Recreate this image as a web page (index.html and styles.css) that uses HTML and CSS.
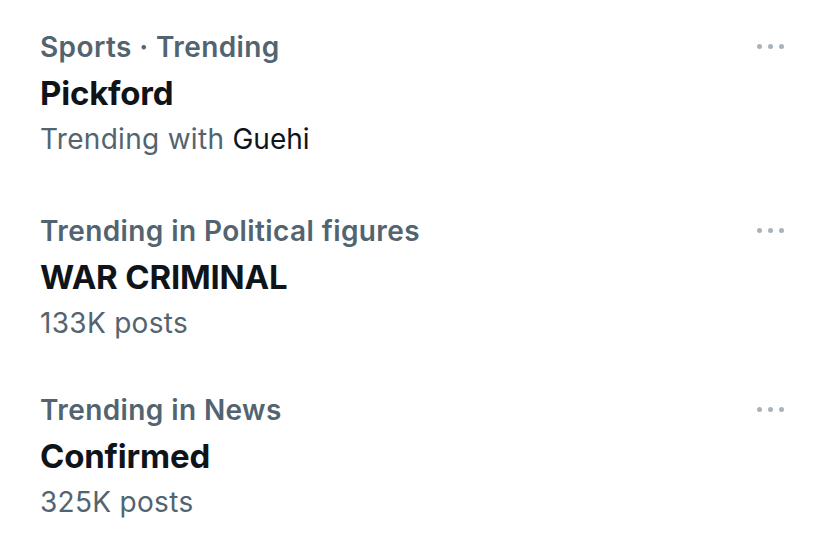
FILE: index.html
```html
<!DOCTYPE html>
<html>
<head>
<meta charset="utf-8">
<link rel="stylesheet" href="styles.css">
</head>
<body>
<div class="list">
  <div class="trend trend-first">
    <div class="text">
      <div class="meta">Sports · Trending</div>
      <div class="title">Pickford</div>
      <div class="sub">Trending with <span class="dark">Guehi</span></div>
    </div>
    <div class="more"><span></span><span></span><span></span></div>
  </div>
  <div class="trend">
    <div class="text">
      <div class="meta">Trending in Political figures</div>
      <div class="title">WAR CRIMINAL</div>
      <div class="sub">133K posts</div>
    </div>
    <div class="more"><span></span><span></span><span></span></div>
  </div>
  <div class="trend trend-last">
    <div class="text">
      <div class="meta">Trending in News</div>
      <div class="title">Confirmed</div>
      <div class="sub">325K posts</div>
    </div>
    <div class="more"><span></span><span></span><span></span></div>
  </div>
</div>
</body>
</html>
```
FILE: styles.css
```css
html, body {
  margin: 0;
  padding: 0;
  background: #ffffff;
}
body {
  font-family: Inter, "Noto Sans", sans-serif;
  width: 828px;
  height: 549px;
  overflow: hidden;
}
.list {
  display: flex;
  flex-direction: column;
  gap: 43px;
  padding: 24px 0 0 40px;
}
.trend {
  display: flex;
  justify-content: space-between;
  align-items: flex-start;
  padding-right: 44px;
}
.trend-first {
  margin-bottom: 3px;
}
.trend-last {
  margin-top: -2px;
}
.text {
  display: flex;
  flex-direction: column;
}
.meta {
  font-size: 28px;
  font-weight: 600;
  color: #536471;
  line-height: 46px;
  letter-spacing: 0.4px;
}
.title {
  font-size: 33px;
  font-weight: 700;
  color: #0f1419;
  line-height: 46px;
  letter-spacing: -0.2px;
}
.sub {
  font-size: 28px;
  font-weight: 400;
  color: #536471;
  line-height: 46px;
  letter-spacing: 0.3px;
}
.sub .dark {
  color: #0f1419;
  letter-spacing: 0;
}
.more {
  display: flex;
  gap: 6px;
  margin-top: 20px;
}
.more span {
  width: 5px;
  height: 5px;
  border-radius: 50%;
  background: #a9b3bc;
}
```
